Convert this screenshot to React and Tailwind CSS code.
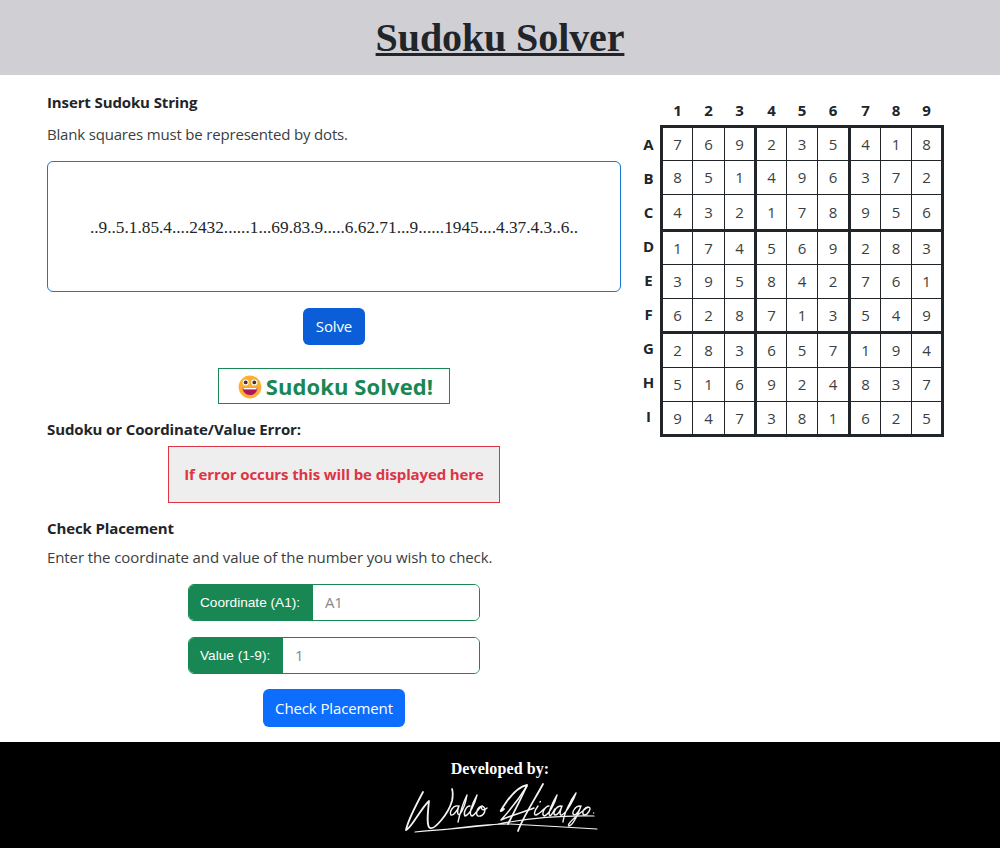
const ROWS = ["769235418", "851496372", "432178956", "174569283", "395842761", "628713549", "283657194", "516924837", "947381625"];
const PUZZLE = "..9..5.1.85.4....2432......1...69.83.9.....6.62.71...9......1945....4.37.4.3..6..";
const GRID_COLS = "grid-cols-[30px_32px_32px_30px_31px_33px_30px_31px_29px]";
const GRID_ROWS = "grid-rows-[33px_34px_37px_33px_34px_35px_34px_34px_32px]";

function Smiley() {
  return (
    <svg className="h-[24px] w-[24px]" viewBox="0 0 24 24">
      <circle cx="12" cy="12" r="11.4" fill="#fbb034" />
      <circle cx="7.7" cy="7.4" r="3" fill="#fff" />
      <circle cx="16.3" cy="7.4" r="3" fill="#fff" />
      <circle cx="7.7" cy="7.4" r="1.9" fill="#45332c" />
      <circle cx="16.3" cy="7.4" r="1.9" fill="#45332c" />
      <path d="M4.6 12.8h14.8c0 4-3 7.2-7.4 7.2s-7.4-3.2-7.4-7.2z" fill="#b01657" />
      <path d="M5.4 12.8h13.2v1.6H5.4z" fill="#fff" />
    </svg>
  );
}

function Signature() {
  return (
    <svg className="h-[54px] w-[200px] shrink-0 overflow-visible" viewBox="0 0 200 54" fill="none" stroke="#f4f4f4" strokeLinecap="round" strokeLinejoin="round">
      <path strokeWidth="1.8" d="M23 11C16 24 8 39 6 49C11 48 21 27 29 20C28 30 26 45 30 47C34 49 48 34 52 20C53 15 53 11 52 8" />
      <path strokeWidth="1.4" d="M58 25C53 24 49 31 51 34C54 35 58 28 59 25C57 30 57 35 60 33C64 28 66 20 67 14C63 22 60 32 58 41M70 25C66 25 63 32 65 35C70 34 75 22 77 14C72 23 68 34 72 35C75 34 78 28 82 25C77 26 75 34 78 35C84 36 88 27 82 25C80 29 84 30 87 27" />
      <path strokeWidth="1.8" d="M104 28C98 33 101 29 107 20C113 12 121 5 127 4C123 14 115 29 108 43M143 3C135 18 123 36 118 50" />
      <path strokeWidth="1.5" d="M127 5C119 18 111 28 101 39C112 34 124 31 134 27" />
      <path strokeWidth="1.4" d="M138 25C135 29 133 34 136 34C139 33 141 31 144 28M140 21L140.4 20.6M149 25C145 25 141 33 144 35C149 34 155 22 157 14C152 22 147 34 150 35C152 34 153 31 155 28M161 25C156 25 152 33 155 34C159 34 161 28 162 25C160 30 159 35 162 34C168 30 174 18 176 12C170 20 164 33 163 41M180 25C175 25 171 32 174 34C177 34 180 28 181 25C178 33 173 44 169 45C166 44 176 35 184 29C187 26 190 25 190 28C189 32 185 36 183 33C182 30 185 26 188 26" />
      <circle cx="193.5" cy="32" r="0.3" strokeWidth="0.6" />
      <path strokeWidth="1.2" d="M15 51C55 47 70 47 98 43C125 38 155 34 194 35M48 48C75 45 85 43 110 43C145 45 165 46 197 48" />
    </svg>
  );
}

function Field({ label, placeholder, width }) {
  return (
    <div className="flex h-[37px] w-[292px] overflow-hidden rounded-[6px] border border-[#198754]">
      <label className={`${width} flex items-center bg-[#198754] pt-px pl-[11px] font-['Liberation_Sans',sans-serif] text-[13.65px] tracking-normal text-white`}>{label}</label>
      <input placeholder={placeholder} className="min-w-0 flex-1 bg-white px-[12px] text-[15px] outline-none placeholder:text-[#85898d]" />
    </div>
  );
}

export default function App() {
  return (
    <div className="flex h-[848px] w-[1000px] flex-col bg-white font-['Open_Sans',sans-serif] text-[15px] tracking-[-0.12px] text-[#212529]">
      <header className="flex h-[75px] items-center justify-center bg-[#d0cfd4]">
        <h1 className="font-['Liberation_Serif',serif] text-[40px] leading-[48px] font-bold tracking-[-0.1px] underline decoration-[3px] underline-offset-[2px]">Sudoku Solver</h1>
      </header>
      <main className="flex h-[667px]">
        <section className="ml-[47px] flex w-[574px] flex-col items-center">
          <h2 className="mt-[15px] self-start leading-6 font-bold">Insert Sudoku String</h2>
          <p className="mt-[8px] self-start leading-6 tracking-[-0.18px] text-[#3a3e41]">Blank squares must be represented by dots.</p>
          <div className="mt-[15px] flex h-[131px] w-full items-center justify-center rounded-[6px] border border-[#1a76d2] pt-[2px] font-['Liberation_Serif',serif] text-[17.3px] tracking-normal">{PUZZLE}</div>
          <button className="mt-[16px] h-[37px] w-[62px] rounded-[6px] bg-[#0b5ed7] text-white">Solve</button>
          <div className="mt-[23px] flex h-[36px] w-[232px] items-center justify-center gap-[4px] border border-[#198754] pt-px pl-[3px] text-[22px] font-bold tracking-[0.1px] text-[#198754]">
            <Smiley /><span>Sudoku Solved!</span>
          </div>
          <h2 className="mt-[13px] self-start leading-6 font-bold">Sudoku or Coordinate/Value Error:</h2>
          <div className="mt-[5px] flex h-[57px] w-[332px] items-center justify-center border border-[#dc3545] bg-[#eee] font-bold text-[#dc3545]">If error occurs this will be displayed here</div>
          <h2 className="mt-[13px] self-start leading-6 font-bold">Check Placement</h2>
          <p className="mt-[5px] self-start leading-6 tracking-[-0.1px] text-[#3a3e41]">Enter the coordinate and value of the number you wish to check.</p>
          <form className="mt-[15px] flex flex-col items-center gap-[16px]">
            <Field label="Coordinate (A1):" placeholder="A1" width="w-[124px]" />
            <Field label="Value (1-9):" placeholder="1" width="w-[94px]" />
            <button type="button" className="-mt-px h-[38px] w-[142px] rounded-[6px] bg-[#0d6efd] pt-px text-white">Check Placement</button>
          </form>
        </section>
        <section className="ml-[19px] w-[305px] pt-[24px] tracking-normal">
          <div className={`ml-[23px] grid h-[26px] ${GRID_COLS} font-bold`}>
            {[1, 2, 3, 4, 5, 6, 7, 8, 9].map((n) => <span key={n} className={`text-center leading-[23px] ${n === 9 ? "" : n % 3 === 0 ? "pr-[3px]" : "pr-px"}`}>{n}</span>)}
          </div>
          <div className="flex">
            <div className="flex w-[17px] shrink-0 flex-col pt-[2px] text-center font-bold">
              {"ABCDEFGHI".split("").map((c) => <span key={c} className="h-[34px] leading-[34px]">{c}</span>)}
            </div>
            <div className={`ml-[3px] grid shrink-0 border-[3px] border-[#212529] ${GRID_COLS} ${GRID_ROWS} text-[#3a3e41]`}>
              {ROWS.flatMap((row, r) => row.split("").map((d, c) => (
                <span key={`${r}${c}`} className={`flex items-center justify-center border-[#212529] ${c === 8 ? "" : c % 3 === 2 ? "border-r-[3px]" : "border-r"} ${r === 8 ? "" : r % 3 === 2 ? "border-b-[3px]" : "border-b"}`}>{d}</span>
              )))}
            </div>
          </div>
        </section>
      </main>
      <footer className="flex h-[106px] flex-col items-center bg-black pt-[15px] text-white">
        <p className="font-['Liberation_Serif',serif] text-[16px] leading-6 font-bold tracking-[0.1px]">Developed by:</p>
        <Signature />
      </footer>
    </div>
  );
}
